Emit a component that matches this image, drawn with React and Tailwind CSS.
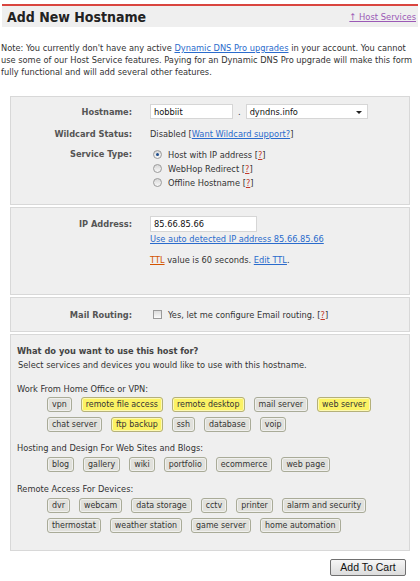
import React from "react";

const font = { fontFamily: '"DejaVu Sans Condensed", "DejaVu Sans", sans-serif' };

function Tag({ children, on }) {
  return (
    <span
      className={
        "inline-flex h-[15px] items-center rounded-[3px] border px-[4px] text-[8.8px] leading-none text-[#333] shadow-[inset_0_0_0_1px_rgba(255,255,255,0.5)] " +
        (on ? "border-[#b4b07a] bg-[#fbf264]" : "border-[#a9ab98] bg-[#e1e1dc]")
      }
    >
      {children}
    </span>
  );
}

function Radio({ on }) {
  return (
    <span className="relative inline-block h-[9px] w-[9px] shrink-0 rounded-full border border-[#9a9a9a] bg-gradient-to-b from-[#d8d8d8] to-[#f8f8f8]">
      {on && <span className="absolute left-[2px] top-[2px] h-[3px] w-[3px] rounded-full bg-[#1f4e8c]" />}
    </span>
  );
}

const Q = () => (
  <span>
    [<span className="text-[#c0392b] underline">?</span>]
  </span>
);

function Row({ label, children, className = "" }) {
  return (
    <div className={"flex " + className}>
      <div className="w-[121px] shrink-0 text-right font-bold text-[#555]">{label}</div>
      <div className="ml-[18px] flex-1">{children}</div>
    </div>
  );
}

export default function App() {
  return (
    <div className="relative h-[581px] w-[420px] overflow-hidden bg-white text-[9.2px] text-[#333]" style={font}>
      <div className="mx-[2px] mt-[4px] flex h-[23px] items-center justify-between border-t-2 border-[#d9453f] bg-[#efefef] pl-[5px] pr-[2px]">
        <h1 className="text-[14px] font-bold leading-none text-[#222]">Add New Hostname</h1>
        <a className="text-[9.3px] text-[#9b59b6] underline">↑ Host Services</a>
      </div>

      <div className="mt-[15px] whitespace-nowrap pl-[1px] leading-[12px]">
        <div>
          Note: You currently don't have any active{" "}
          <a className="text-[#2a6bcc] underline">Dynamic DNS Pro upgrades</a> in your account. You cannot
        </div>
        <div>use some of our Host Service features. Paying for an Dynamic DNS Pro upgrade will make this form</div>
        <div>fully functional and will add several other features.</div>
      </div>

      <div className="mx-[10px] mt-[18px] flex flex-col gap-[2px]">
        {/* box 1 */}
        <div className="h-[109px] border border-[#d8d8d8] bg-[#efefef] pt-[7px]">
          <Row label="Hostname:" className="items-center">
            <div className="flex items-center">
              <div className="flex h-[15px] w-[83px] items-center border border-[#d6d6d6] bg-white pl-[3px] text-[#111]">hobbiit</div>
              <span className="mx-[5px]">.</span>
              <div className="relative flex h-[15px] w-[122px] items-center border border-[#d6d6d6] bg-white pl-[3px] text-[#111]">
                dyndns.info
                <span className="absolute right-[5px] top-[6px] h-0 w-0 border-x-[3px] border-t-[3px] border-x-transparent border-t-[#222]" />
              </div>
            </div>
          </Row>
          <Row label="Wildcard Status:" className="mt-[8px]">
            Disabled [<a className="text-[#2a6bcc] underline">Want Wildcard support?</a>]
          </Row>
          <Row label="Service Type:" className="mt-[6px]">
            <div className="mt-[1px] flex flex-col">
              <div className="flex h-[14px] items-center gap-[6px] pl-[3px]"><Radio on /><span>Host with IP address <Q /></span></div>
              <div className="flex h-[14px] items-center gap-[6px] pl-[3px]"><Radio /><span>WebHop Redirect <Q /></span></div>
              <div className="flex h-[14px] items-center gap-[6px] pl-[3px]"><Radio /><span>Offline Hostname <Q /></span></div>
            </div>
          </Row>
        </div>

        {/* box 2 */}
        <div className="h-[88px] border border-[#d8d8d8] bg-[#efefef] pt-[8px]">
          <Row label="IP Address:" className="items-center">
            <div className="flex h-[16px] w-[107px] items-center border border-[#d6d6d6] bg-white pl-[3px] text-[#111]">85.66.85.66</div>
          </Row>
          <Row label="" className="mt-[0px]">
            <a className="text-[#2a6bcc] underline">Use auto detected IP address 85.66.85.66</a>
          </Row>
          <Row label="" className="mt-[7px]">
            <span className="text-[#d35400] underline">TTL</span> value is 60 seconds.{" "}
            <a className="text-[#2a6bcc] underline">Edit TTL</a>.
          </Row>
        </div>

        {/* box 3 */}
        <div className="flex h-[35px] items-center border border-[#d8d8d8] bg-[#efefef]">
          <Row label="Mail Routing:" className="w-full items-center">
            <div className="flex items-center gap-[6px] pl-[3px]">
              <span className="inline-block h-[9px] w-[9px] border border-[#9a9a9a] bg-gradient-to-b from-[#dcdcdc] to-[#fafafa]" />
              <span>Yes, let me configure Email routing. <Q /></span>
            </div>
          </Row>
        </div>

        {/* box 4 */}
        <div className="h-[217px] border border-[#d8d8d8] bg-[#efefef] pl-[6px] pt-[9px]">
          <div className="font-bold text-[#444]">What do you want to use this host for?</div>
          <div className="pl-[1px]">Select services and devices you would like to use with this hostname.</div>

          <div className="mt-[10px]">Work From Home Office or VPN:</div>
          <div className="ml-[30px] mt-[2px] flex flex-col gap-[5px]">
            <div className="flex gap-[9px]">
              <Tag>vpn</Tag><Tag on>remote file access</Tag><Tag on>remote desktop</Tag><Tag>mail server</Tag><Tag on>web server</Tag>
            </div>
            <div className="flex gap-[9px]">
              <Tag>chat server</Tag><Tag on>ftp backup</Tag><Tag>ssh</Tag><Tag>database</Tag><Tag>voip</Tag>
            </div>
          </div>

          <div className="mt-[9px]">Hosting and Design For Web Sites and Blogs:</div>
          <div className="ml-[30px] mt-[2px] flex gap-[9px]">
            <Tag>blog</Tag><Tag>gallery</Tag><Tag>wiki</Tag><Tag>portfolio</Tag><Tag>ecommerce</Tag><Tag>web page</Tag>
          </div>

          <div className="mt-[10px]">Remote Access For Devices:</div>
          <div className="ml-[30px] mt-[2px] flex flex-col gap-[5px]">
            <div className="flex gap-[9px]">
              <Tag>dvr</Tag><Tag>webcam</Tag><Tag>data storage</Tag><Tag>cctv</Tag><Tag>printer</Tag><Tag>alarm and security</Tag>
            </div>
            <div className="flex gap-[9px]">
              <Tag>thermostat</Tag><Tag>weather station</Tag><Tag>game server</Tag><Tag>home automation</Tag>
            </div>
          </div>
        </div>
      </div>

      <div className="mr-[14px] mt-[8px] flex justify-end">
        <button
          className="h-[17px] w-[76px] rounded-[2px] border border-[#707070] bg-gradient-to-b from-[#f6f6f6] to-[#dcdcdc] text-[10.5px] leading-none text-[#111]"
          style={{ fontFamily: '"Liberation Sans", Arial, sans-serif' }}
        >
          Add To Cart
        </button>
      </div>
    </div>
  );
}
